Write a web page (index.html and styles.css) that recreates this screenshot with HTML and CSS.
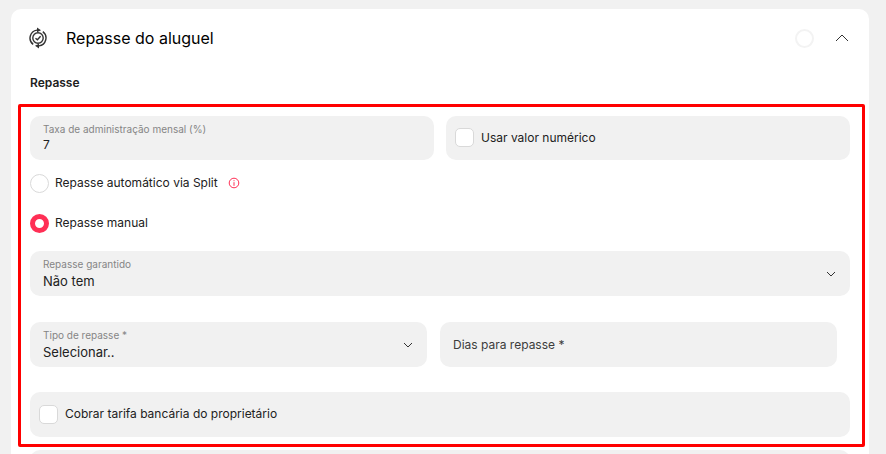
FILE: index.html
```
<!DOCTYPE html>
<html lang="pt-BR">
<head>
    <meta charset="UTF-8">
    <meta name="viewport" content="width=device-width, initial-scale=1.0">
    <title>Repasse do aluguel</title>
    <link rel="stylesheet" href="styles.css">
</head>
<body>
    <form class="card">
        <header class="card-header">
            <svg class="card-icon" viewBox="0 0 18 22" aria-hidden="true">
                <circle cx="9" cy="11" r="5.200"/>
                <path d="M6.500 11.200l1.900 1.600 3.200-3.600"/>
                <path d="M4.200 17.400A8 8 0 0 1 8 3.100h2"/>
                <path d="M13.800 4.600A8 8 0 0 1 10 18.900H8"/>
                <path class="arrow" d="M8 .5l4 2.800L8 5.200zM10 16.800l-4 1.900 4 2.800z"/>
            </svg>
            <h1>Repasse do aluguel</h1>
            <span class="status"></span>
            <button type="button" class="toggle" aria-label="Recolher">
                <svg viewBox="0 0 14 8"><path d="M1 7l6-6 6 6"/></svg>
            </button>
        </header>

        <h2>Repasse</h2>

        <section class="highlight">
            <div class="row">
                <div class="field">
                    <label for="taxa">Taxa de administração mensal (%)</label>
                    <input type="text" id="taxa" value="7">
                </div>
                <label class="field check">
                    <input type="checkbox">
                    Usar valor numérico
                </label>
            </div>

            <div class="options">
                <div class="option">
                    <label>
                        <input type="radio" name="repasse">
                        Repasse automático via Split
                    </label>
                    <svg class="info" viewBox="0 0 12 12" aria-hidden="true">
                        <circle cx="6" cy="6" r="4.800"/>
                        <path d="M6 5.200v3.600M6 3.200v1"/>
                    </svg>
                </div>
                <div class="option">
                    <label>
                        <input type="radio" name="repasse" checked>
                        Repasse manual
                    </label>
                </div>
            </div>

            <div class="field select">
                <label for="garantido">Repasse garantido</label>
                <select id="garantido">
                    <option>Não tem</option>
                </select>
                <svg class="chevron" viewBox="0 0 10 6"><path d="M1 1l4 4 4-4"/></svg>
            </div>

            <div class="row row-inner">
                <div class="field select">
                    <label for="tipo">Tipo de repasse *</label>
                    <select id="tipo">
                        <option>Selecionar..</option>
                    </select>
                    <svg class="chevron" viewBox="0 0 10 6"><path d="M1 1l4 4 4-4"/></svg>
                </div>
                <div class="field empty">
                    <input type="text" placeholder="Dias para repasse *" aria-label="Dias para repasse">
                </div>
            </div>

            <label class="field check">
                <input type="checkbox">
                Cobrar tarifa bancária do proprietário
            </label>
        </section>

        <div class="field next"></div>
    </form>
</body>
</html>
```

FILE: styles.css
```
* {
    box-sizing: border-box;
}
body {
    margin: 0;
    padding: 9px 17px 0 11px;
    height: 100vh;
    overflow: hidden;
    background-color: #f1f1f1;
    color: #212121;
    font-family: Inter, "Liberation Sans", sans-serif;
    font-size: 12px;
    line-height: 16px;
}
svg {
    fill: none;
    stroke: #333;
}
.card {
    padding: 18px 4px 20px 7px;
    background: white;
    border-radius: 10px;
}
.card-header {
    display: flex;
    align-items: center;
    height: 22px;
    padding: 0 16px 0 11px;
}
.card-icon {
    width: 18px;
    height: 22px;
    stroke-width: 1.4;
}
.arrow {
    fill: #333;
    stroke: none;
}
h1 {
    flex: 1;
    margin: 0 0 0 19px;
    color: black;
    font-size: 16px;
    font-weight: 400;
    line-height: 22px;
}
.status {
    width: 19px;
    height: 19px;
    border: 2px solid #f3f3f3;
    border-radius: 50%;
}
.toggle {
    display: flex;
    margin-left: 21px;
    padding: 0;
    border: none;
    background: none;
}
.toggle svg {
    width: 14px;
    height: 8px;
}
h2 {
    margin: 26px 12px 13px;
    font-size: 12px;
    font-weight: 600;
    line-height: 16px;
}
.highlight {
    padding: 9px 12px 7px 9px;
    border: 3px solid #ff0000;
    border-radius: 2px;
}
.row {
    display: grid;
    grid-template-columns: 1fr 1fr;
    gap: 12px;
}
.row-inner {
    margin: 26px 13px 25px 0;
    gap: 13px;
}
.field {
    position: relative;
    height: 45px;
    padding: 5px 13px;
    background-color: #f1f1f1;
    border-radius: 10px;
}
.row .field {
    height: 44px;
}
.row-inner .field {
    height: 45px;
}
.field > label {
    display: block;
    color: #858585;
    font-size: 10px;
}
.field input[type="text"],
.field select {
    display: block;
    width: 100%;
    height: 16px;
    padding: 0;
    border: none;
    outline: none;
    background: none;
    color: #212121;
    font: inherit;
    appearance: none;
}
.field select {
    height: 18px;
    font-size: 13px;
}
.field input::placeholder {
    color: #3c3c3c;
    opacity: 1;
}
.chevron {
    position: absolute;
    top: 20px;
    right: 14px;
    width: 10px;
    height: 6px;
    pointer-events: none;
}
.empty {
    display: flex;
    align-items: center;
}
.field.check {
    display: flex;
    align-items: center;
    gap: 7px;
    padding: 0 9px 1px;
    color: #212121;
    font-size: 12px;
}
input[type="checkbox"],
input[type="radio"] {
    width: 19px;
    height: 19px;
    margin: 0;
    border: 1px solid #d9d9d9;
    background: white;
    appearance: none;
}
input[type="checkbox"] {
    border-radius: 5px;
}
input[type="radio"] {
    border-radius: 50%;
}
input[type="radio"]:checked {
    border: 5px solid #ff2f55;
}
.options {
    display: grid;
    gap: 20px;
    padding: 13px 0 18px;
}
.option {
    display: flex;
    align-items: center;
    gap: 10px;
    height: 20px;
}
.option label {
    display: flex;
    align-items: center;
    gap: 6px;
}
.info {
    width: 12px;
    height: 12px;
    stroke: #ff2f55;
}
.next {
    margin: 3px 15px 0 12px;
}
```
